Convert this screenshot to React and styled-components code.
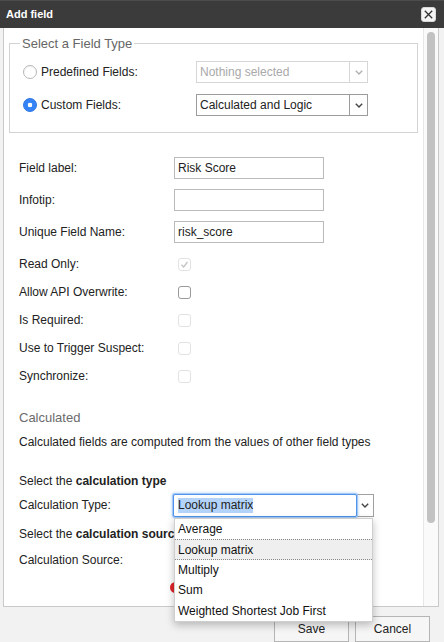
import React from "react";
import styled, { createGlobalStyle } from "styled-components";

const GlobalStyle = createGlobalStyle`
  html, body { margin: 0; padding: 0; }
  body {
    font-family: "Liberation Sans", Arial, Helvetica, sans-serif;
    font-size: 12px;
    color: #222;
    background: #f2f2f2;
  }
  * { box-sizing: border-box; }
`;

const Dialog = styled.div`
  width: 444px;
  height: 642px;
  display: flex;
  flex-direction: column;
  background: #f2f2f2;
  overflow: hidden;
  position: relative;
`;

const TitleBar = styled.div`
  height: 28px;
  flex: none;
  background: #3b3b3b;
  border-top: 1px solid #4c4c4c;
  display: flex;
  align-items: center;
  justify-content: space-between;
  padding: 0 8px 1px 6px;
`;

const Title = styled.h1`
  margin: 0;
  font-size: 11px;
  font-weight: bold;
  color: #fff;
  line-height: 14px;
`;

const CloseButton = styled.button`
  width: 15px;
  height: 15px;
  padding: 0;
  margin: 0;
  border: 1px solid #d8d8d8;
  border-radius: 3px;
  background: #f5f5f5;
  display: flex;
  align-items: center;
  justify-content: center;
  color: #333;
`;

const Main = styled.div`
  flex: 1;
  min-height: 0;
  display: flex;
  padding: 0 5px 0 3px;
`;

const Panel = styled.div`
  flex: 1;
  display: flex;
  background: #fff;
  border: 1px solid #c9c9c9;
  border-top: none;
`;

const Content = styled.div`
  flex: 1;
  padding-top: 8px;
  min-width: 0;
`;

const ScrollTrack = styled.div`
  width: 15px;
  flex: none;
  border-left: 1px solid #e6e6e6;
  background: #fafafa;
  padding: 4px 3px 0 3px;
`;

const ScrollThumb = styled.div`
  height: 491px;
  border-radius: 4px;
  background: #c2c2c2;
`;

const FieldTypeSet = styled.fieldset`
  margin: 0 5px;
  padding: 10px 0 16px 10px;
  border: 1px solid #d3d3d3;
  min-width: 0;
`;

const Legend = styled.legend`
  padding: 0 2px;
  font-size: 13px;
  line-height: 15px;
  color: #666;
`;

const FieldTypeRow = styled.div`
  display: grid;
  grid-template-columns: 176px 172px;
  align-items: center;
  height: 22px;
  & + & { margin-top: 11px; }
`;

const RadioLabel = styled.label`
  display: flex;
  align-items: center;
  gap: 4px;
  padding-left: 3px;
  line-height: 15px;
`;

const Radio = styled.input.attrs({ type: "radio" })`
  appearance: none;
  -webkit-appearance: none;
  width: 14px;
  height: 14px;
  margin: 0;
  border: 1px solid #b8b8b8;
  border-radius: 50%;
  background: #fff;
  box-shadow: inset 0 1px 1px rgba(0, 0, 0, 0.06);
  &:checked {
    border-color: #2b73e4;
    background: radial-gradient(circle, #fff 0 2px, #3483f7 2.6px);
    box-shadow: none;
  }
`;

const SelectBox = styled.div`
  display: flex;
  width: ${(p) => p.$width}px;
  height: 22px;
  border: 1px solid ${(p) => (p.$disabled ? "#d6d6d6" : "#9c9c9c")};
  background: #fff;
  color: ${(p) => (p.$disabled ? "#a9a9a9" : "#222")};
`;

const SelectText = styled.div`
  flex: 1;
  display: flex;
  align-items: center;
  padding: 0 3px;
  white-space: nowrap;
  overflow: hidden;
`;

const SelectArrow = styled.div`
  width: 18px;
  flex: none;
  border-left: 1px solid ${(p) => (p.$disabled ? "#d6d6d6" : "#9c9c9c")};
  display: flex;
  align-items: center;
  justify-content: center;
  color: ${(p) => (p.$disabled ? "#b0b0b0" : "#444")};
`;

const Fields = styled.div`
  margin-top: 19px;
  padding-left: 15px;
`;

const FormRow = styled.div`
  display: grid;
  grid-template-columns: ${(p) => p.$labelWidth}px auto;
  align-items: center;
  justify-items: start;
  height: ${(p) => p.$h}px;
  margin-top: ${(p) => p.$mt || 0}px;
`;

const CheckGroup = styled.div`
  margin-top: 2px;
`;

const Label = styled.label`
  line-height: 15px;
  color: #222;
`;

const TextInput = styled.input`
  width: 150px;
  height: 22px;
  margin: 0;
  padding: 0 3px;
  border: 1px solid #bababa;
  border-radius: 0;
  font: inherit;
  font-size: 12px;
  color: #222;
  background: #fff;
  outline: none;
`;

const Checkbox = styled.span`
  width: 13px;
  height: 13px;
  margin-left: 4px;
  border: 1px solid ${(p) => (p.$disabled ? "#e2e2e2" : "#9a9a9a")};
  border-radius: 3px;
  background: #fff;
  display: flex;
  align-items: center;
  justify-content: center;
`;

const SectionHeading = styled.h2`
  margin: 20px 0 0;
  font-size: 13px;
  font-weight: normal;
  line-height: 15px;
  color: #6b6b6b;
`;

const Para = styled.p`
  margin: ${(p) => p.$mt}px 0 0;
  line-height: 15px;
  white-space: nowrap;
  strong { font-weight: bold; }
`;

const Combo = styled.div`
  position: relative;
  display: flex;
  width: 201px;
  height: 23px;
`;

const ComboField = styled.div`
  flex: 1;
  display: flex;
  align-items: center;
  padding-left: 4px;
  border: 1px solid #4e93ec;
  border-radius: 2px;
  box-shadow: 0 0 0 1px #a6c9f4, 0 0 3px 1px rgba(76, 151, 240, 0.45);
  background: #fff;
  position: relative;
  z-index: 1;
`;

const Selection = styled.span`
  background: #b3d3fb;
  line-height: 15px;
`;

const ComboButton = styled.div`
  width: 17px;
  flex: none;
  border: 1px solid #a0a0a0;
  border-left: none;
  background: #fff;
  display: flex;
  align-items: center;
  justify-content: center;
  color: #444;
`;

const OptionList = styled.ul`
  position: absolute;
  top: calc(100% + 1px);
  left: 1px;
  width: 199px;
  margin: 0;
  padding: 0;
  list-style: none;
  background: #fff;
  border: 1px solid #cfcfcf;
  box-shadow: 0 3px 8px rgba(0, 0, 0, 0.25);
  z-index: 20;
`;

const Option = styled.li`
  height: 20.4px;
  display: flex;
  align-items: center;
  padding: 0 3px;
  white-space: nowrap;
  color: #111;
  background: ${(p) => (p.$active ? "#efefef" : "#fff")};
  border-top: 1px dotted ${(p) => (p.$active ? "#8a8a8a" : "transparent")};
  border-bottom: 1px dotted ${(p) => (p.$active ? "#8a8a8a" : "transparent")};
`;

const MarkerRow = styled.div`
  margin-top: 14px;
  padding-left: 151px;
  height: 11px;
`;

const RedDot = styled.span`
  display: block;
  width: 11px;
  height: 11px;
  border-radius: 50%;
  background: #e1252b;
`;

const Footer = styled.div`
  height: 35px;
  flex: none;
  display: flex;
  justify-content: flex-end;
  gap: 6px;
  padding: 9px 14px 0 0;
`;

const Button = styled.button`
  width: 75px;
  height: 26px;
  margin: 0;
  padding: 0;
  border: 1px solid #b5b5b5;
  border-radius: 0;
  background: #f6f6f6;
  font: inherit;
  font-size: 12px;
  color: #222;
`;

const Chevron = () => (
  <svg width="8" height="5" viewBox="0 0 8 5" aria-hidden="true">
    <polyline points="0.8,0.8 4,4 7.2,0.8" fill="none" stroke="currentColor" strokeWidth="1.4" />
  </svg>
);

const CheckMark = () => (
  <svg width="9" height="9" viewBox="0 0 9 9" aria-hidden="true">
    <polyline points="1.5,4.8 3.6,7 7.5,2" fill="none" stroke="#c4c4c4" strokeWidth="1.3" />
  </svg>
);

const checkRows = [
  { label: "Read Only:", disabled: true, checked: true },
  { label: "Allow API Overwrite:", disabled: false, checked: false },
  { label: "Is Required:", disabled: true, checked: false },
  { label: "Use to Trigger Suspect:", disabled: true, checked: false },
  { label: "Synchronize:", disabled: true, checked: false },
];

const textRows = [
  { label: "Field label:", value: "Risk Score" },
  { label: "Infotip:", value: "" },
  { label: "Unique Field Name:", value: "risk_score" },
];

const options = ["Average", "Lookup matrix", "Multiply", "Sum", "Weighted Shortest Job First"];

export default function App() {
  return (
    <>
      <GlobalStyle />
      <Dialog>
        <TitleBar>
          <Title>Add field</Title>
          <CloseButton aria-label="Close">
            <svg width="9" height="9" viewBox="0 0 9 9" aria-hidden="true">
              <path d="M0.8 0.8 L8.2 8.2 M8.2 0.8 L0.8 8.2" stroke="#333" strokeWidth="1.3" fill="none" />
            </svg>
          </CloseButton>
        </TitleBar>
        <Main>
          <Panel>
            <Content>
              <FieldTypeSet>
                <Legend>Select a Field Type</Legend>
                <FieldTypeRow>
                  <RadioLabel>
                    <Radio name="ft" readOnly />
                    Predefined Fields:
                  </RadioLabel>
                  <SelectBox $width={172} $disabled>
                    <SelectText>Nothing selected</SelectText>
                    <SelectArrow $disabled>
                      <Chevron />
                    </SelectArrow>
                  </SelectBox>
                </FieldTypeRow>
                <FieldTypeRow>
                  <RadioLabel>
                    <Radio name="ft" defaultChecked />
                    Custom Fields:
                  </RadioLabel>
                  <SelectBox $width={172}>
                    <SelectText>Calculated and Logic</SelectText>
                    <SelectArrow>
                      <Chevron />
                    </SelectArrow>
                  </SelectBox>
                </FieldTypeRow>
              </FieldTypeSet>

              <Fields>
                {textRows.map((r) => (
                  <FormRow key={r.label} $labelWidth={155} $h={32}>
                    <Label>{r.label}</Label>
                    <TextInput defaultValue={r.value} />
                  </FormRow>
                ))}
                <CheckGroup>
                  {checkRows.map((r) => (
                    <FormRow key={r.label} $labelWidth={155} $h={28}>
                      <Label>{r.label}</Label>
                      <Checkbox $disabled={r.disabled}>{r.checked && <CheckMark />}</Checkbox>
                    </FormRow>
                  ))}
                </CheckGroup>

                <SectionHeading>Calculated</SectionHeading>
                <Para $mt={10}>Calculated fields are computed from the values of other field types</Para>
                <Para $mt={24}>
                  Select the <strong>calculation type</strong>
                </Para>
                <FormRow $labelWidth={154} $h={23} $mt={5}>
                  <Label>Calculation Type:</Label>
                  <Combo>
                    <ComboField>
                      <Selection>Lookup matrix</Selection>
                    </ComboField>
                    <ComboButton>
                      <Chevron />
                    </ComboButton>
                    <OptionList>
                      {options.map((o) => (
                        <Option key={o} $active={o === "Lookup matrix"}>
                          {o}
                        </Option>
                      ))}
                    </OptionList>
                  </Combo>
                </FormRow>
                <Para $mt={10}>
                  Select the <strong>calculation source</strong>
                </Para>
                <Para $mt={11}>Calculation Source:</Para>
                <MarkerRow>
                  <RedDot />
                </MarkerRow>
              </Fields>
            </Content>
            <ScrollTrack>
              <ScrollThumb />
            </ScrollTrack>
          </Panel>
        </Main>
        <Footer>
          <Button>Save</Button>
          <Button>Cancel</Button>
        </Footer>
      </Dialog>
    </>
  );
}
